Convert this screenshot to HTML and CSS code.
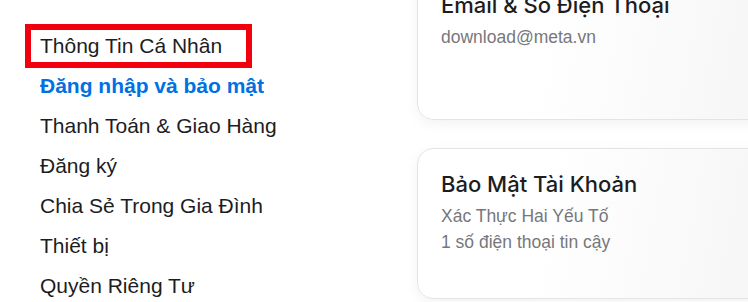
FILE: index.html
```html
<!DOCTYPE html>
<html lang="vi">
<head>
<meta charset="utf-8">
<title>Tài khoản</title>
<link rel="stylesheet" href="styles.css">
</head>
<body>
<div class="page">
  <nav class="sidebar">
    <ul class="menu">
      <li class="menu-item is-highlighted"><span class="hl-box">Thông Tin Cá Nhân</span></li>
      <li class="menu-item is-active">Đăng nhập và bảo mật</li>
      <li class="menu-item">Thanh Toán &amp; Giao Hàng</li>
      <li class="menu-item">Đăng ký</li>
      <li class="menu-item">Chia Sẻ Trong Gia Đình</li>
      <li class="menu-item">Thiết bị</li>
      <li class="menu-item">Quyền Riêng Tư</li>
    </ul>
  </nav>
  <main class="cards">
    <section class="card">
      <h2 class="card-title">Email &amp; Số Điện Thoại</h2>
      <div class="card-body">
        <p class="card-line">download@meta.vn</p>
      </div>
    </section>
    <section class="card">
      <h2 class="card-title">Bảo Mật Tài Khoản</h2>
      <div class="card-body">
        <p class="card-line">Xác Thực Hai Yếu Tố</p>
        <p class="card-line">1 số điện thoại tin cậy</p>
      </div>
    </section>
  </main>
</div>
</body>
</html>
```
FILE: styles.css
```css
html, body {
  margin: 0;
  padding: 0;
  background: #ffffff;
  overflow: hidden;
}

body {
  width: 748px;
  height: 302px;
  font-family: "Liberation Sans", Arial, sans-serif;
  color: #1d1d1f;
}

.page {
  display: grid;
  grid-template-columns: 417px 420px;
}

.sidebar {
  padding: 26px 0 0 40px;
}

.menu {
  list-style: none;
  margin: 0;
  padding: 0;
}

.menu-item {
  height: 40px;
  line-height: 40px;
  font-size: 21px;
  font-weight: 400;
  white-space: nowrap;
}

.menu-item.is-active {
  color: #0071e3;
  font-weight: 700;
}

.is-highlighted {
  display: flex;
  align-items: center;
}

.hl-box {
  display: inline-block;
  line-height: 32px;
  height: 32px;
  margin-left: -9px;
  padding: 0 24px 0 9px;
  outline: 6px solid #f2000d;
}

.cards {
  display: flex;
  flex-direction: column;
  gap: 28px;
  margin-top: -31px;
}

.card {
  box-sizing: border-box;
  height: 151px;
  padding: 21px 23px 0;
  border: 1px solid #e4e4e6;
  border-radius: 16px;
  background: linear-gradient(100deg, #ffffff 30%, #f3f3f4 100%);
  box-shadow: 0 4px 14px rgba(0, 0, 0, 0.05);
}

.card-title {
  margin: 0;
  font-family: "Inter", "Roboto", sans-serif;
  font-size: 22px;
  line-height: 28px;
  font-weight: 500;
  color: #1d1d1f;
  white-space: nowrap;
}

.card-body {
  margin-top: 5px;
}

.card-line {
  margin: 0;
  font-family: "Liberation Sans", Arial, sans-serif;
  font-size: 17.5px;
  line-height: 26px;
  color: #77777c;
  white-space: nowrap;
}
```
